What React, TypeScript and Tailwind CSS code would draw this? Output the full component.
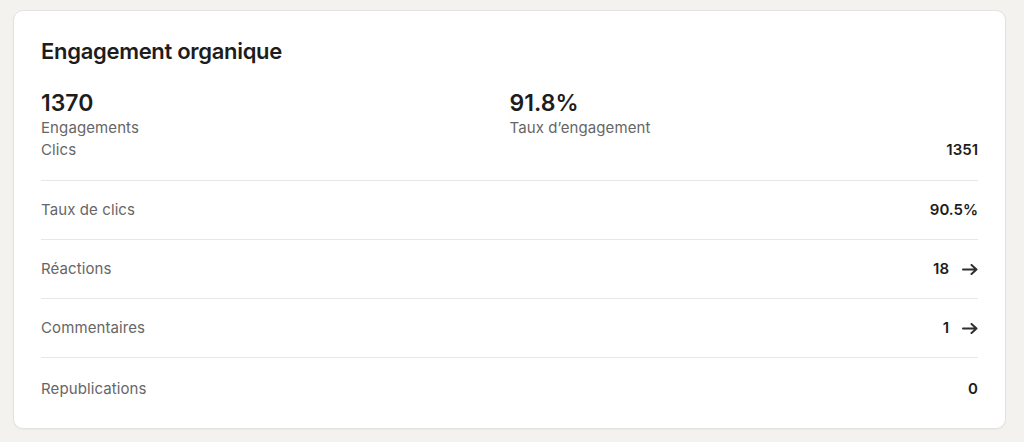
const rows = [
  { label: "Clics", value: "1351", link: false },
  { label: "Taux de clics", value: "90.5%", link: false },
  { label: "Réactions", value: "18", link: true },
  { label: "Commentaires", value: "1", link: true },
  { label: "Republications", value: "0", link: false },
];

function Arrow() {
  return (
    <svg width="16" height="11" viewBox="0 0 16 11" fill="none" stroke="#2f2f2f" strokeWidth="2" strokeLinecap="round" strokeLinejoin="round">
      <path d="M1 5.5H14.5M9.5 1L14.5 5.5L9.5 10" />
    </svg>
  );
}

export default function App() {
  return (
    <main
      className="min-h-screen bg-[#f3f2ef] pt-[10px] pl-[13px] pr-[18px]"
      style={{ fontFamily: "Inter, 'Noto Sans', sans-serif" }}
    >
      <section className="bg-white rounded-[10px] border border-[#e3e2df] shadow-[0_1px_2px_rgba(0,0,0,0.04)] px-[27px] pt-[26px] pb-[10px]">
        <h2 className="text-[22px] leading-[28px] font-semibold text-[#1d1d1d] tracking-[-0.3px]">
          Engagement organique
        </h2>

        {/* Summary */}
        <div className="grid grid-cols-2 mt-[24px]">
          <div>
            <div className="text-[23px] leading-[28px] font-semibold text-[#1d1d1d]">1370</div>
            <div className="text-[15px] leading-[22px] text-[#666666] tracking-[0.1px]">Engagements</div>
          </div>
          <div>
            <div className="text-[23px] leading-[28px] font-semibold text-[#1d1d1d]">91.8%</div>
            <div className="text-[15px] leading-[22px] text-[#666666] tracking-[0.1px]">Taux d’engagement</div>
          </div>
        </div>

        {/* Metrics */}
        <ul>
          {rows.map((r, i) => (
            <li
              key={r.label}
              className={`flex items-center justify-between ${
                i === 0
                  ? "pt-[1px] pb-[20px]"
                  : i === rows.length - 1
                  ? "pt-[21px] pb-[19px] border-t border-[#e8e7e4]"
                  : "py-[19px] border-t border-[#e8e7e4]"
              }`}
            >
              <span className="text-[15px] leading-[20px] text-[#666666] tracking-[0.1px]">{r.label}</span>
              <span className="flex items-center gap-[13px] text-[15px] leading-[20px] font-semibold text-[#1d1d1d]">
                {r.value}
                {r.link && <Arrow />}
              </span>
            </li>
          ))}
        </ul>
      </section>
    </main>
  );
}
